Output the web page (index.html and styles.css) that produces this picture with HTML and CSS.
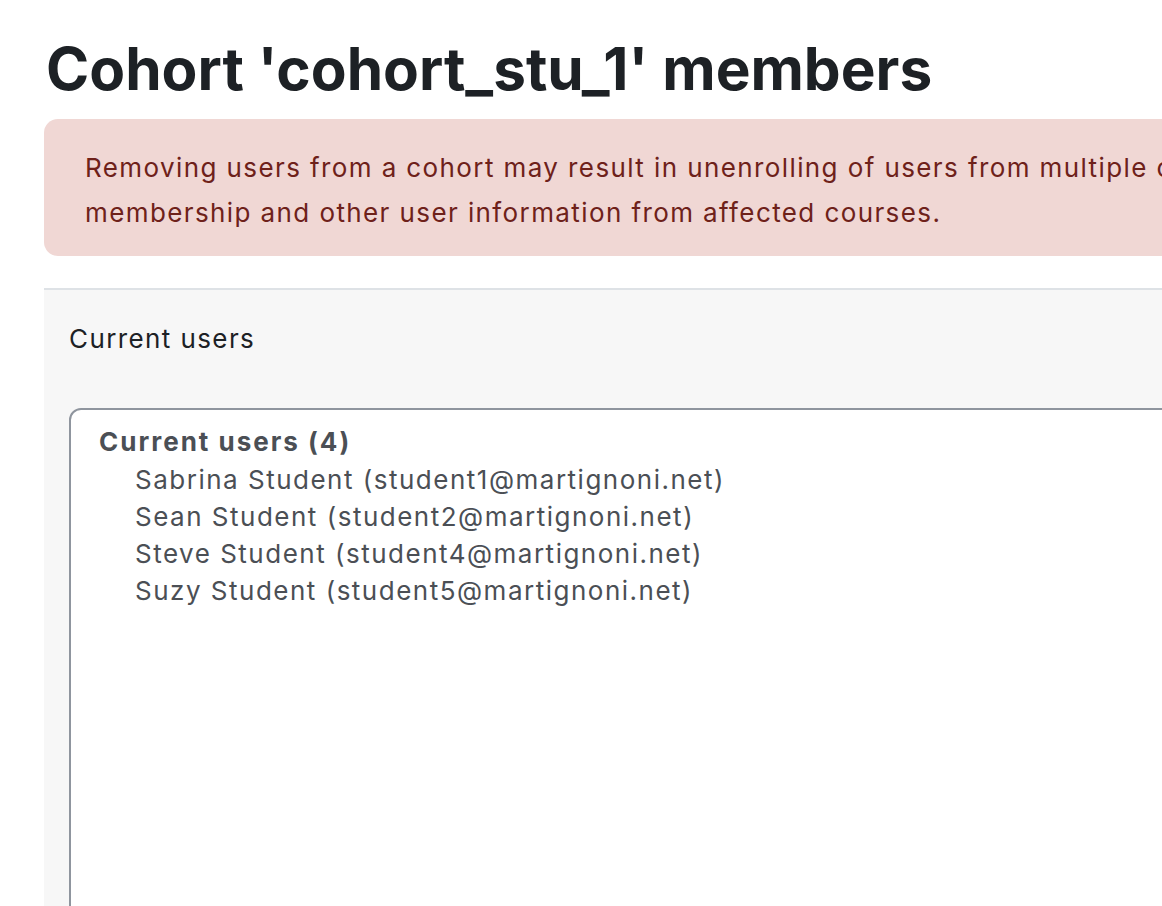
FILE: index.html
```html
<!DOCTYPE html>
<html>
<head>
<meta charset="utf-8">
<link rel="stylesheet" href="styles.css">
</head>
<body>
<div class="page">
  <h2 class="title">Cohort 'cohort_stu_1' members</h2>
  <div class="alert">
    <div class="alert-line">Removing users from a cohort may result in unenrolling of users from multiple courses which includes deleting user settings, grades, group</div>
    <div class="alert-line">membership and other user information from affected courses.</div>
  </div>
  <div class="panel">
    <div class="label">Current users</div>
    <div class="select">
      <div class="optgroup">Current users (4)</div>
      <div class="option">Sabrina Student (student1@martignoni.net)</div>
      <div class="option">Sean Student (student2@martignoni.net)</div>
      <div class="option">Steve Student (student4@martignoni.net)</div>
      <div class="option">Suzy Student (student5@martignoni.net)</div>
    </div>
  </div>
</div>
</body>
</html>
```
FILE: styles.css
```css
html, body {
  margin: 0;
  padding: 0;
  overflow: hidden;
  background: #ffffff;
}
body {
  font-family: Inter, Roboto, "Liberation Sans", sans-serif;
  color: #1d2125;
  width: 1162px;
  height: 906px;
}
.page {
  padding-left: 44px;
  width: 1500px;
}
.title {
  margin: 0;
  padding-top: 34px;
  font-size: 58.5px;
  font-weight: 700;
  line-height: 1.2;
  padding-left: 2px;
  letter-spacing: 0;
}
.alert {
  margin-top: 15px;
  background: #f0d7d4;
  color: #6e211a;
  border-radius: 14px;
  padding: 26px 41px 21px;
  font-size: 26px;
  line-height: 45px;
  letter-spacing: 1.4px;
}
.alert-line {
  white-space: nowrap;
}
.panel {
  margin-top: 32px;
  border-top: 2px solid #dee2e6;
  background: #f7f7f7;
  padding: 29px 25px 0;
  height: 700px;
}
.label {
  font-size: 26px;
  line-height: 40px;
  letter-spacing: 1.4px;
}
.select {
  margin-top: 49px;
  background: #ffffff;
  border: 2px solid #8f959e;
  border-radius: 12px;
  padding: 13px 28px;
  height: 600px;
  color: #4b4f55;
  font-size: 26px;
  line-height: 37px;
  letter-spacing: 1.5px;
}
.optgroup {
  font-weight: 700;
  line-height: 38px;
  letter-spacing: 2px;
}
.option {
  padding-left: 36px;
  white-space: nowrap;
}
```
